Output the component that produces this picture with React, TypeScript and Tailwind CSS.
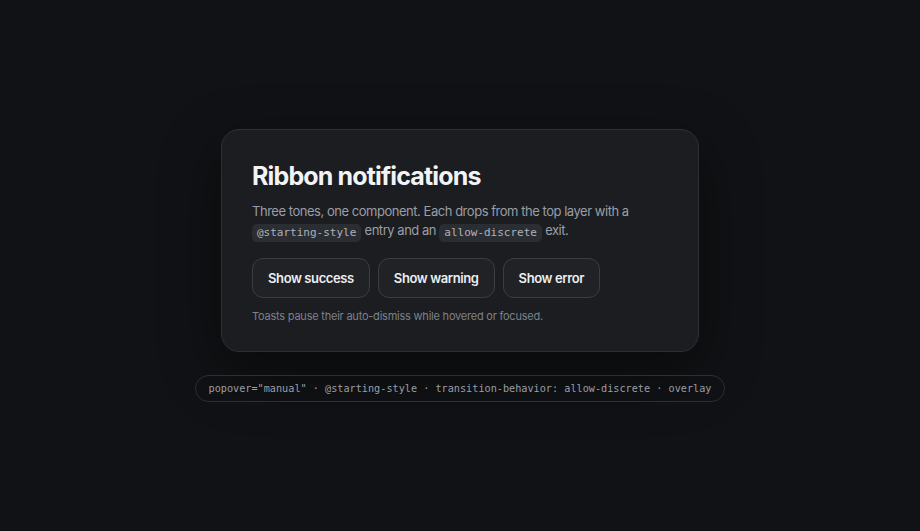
const buttons = ["Show success", "Show warning", "Show error"];

function Code({ children }: { children: React.ReactNode }) {
  return (
    <code className="inline-block rounded-[5px] bg-[#2a2d32] px-[5px] py-[2px] align-[-1px] font-['DejaVu_Sans_Mono',monospace] text-[11px] leading-[14px] tracking-normal text-[#aeb2b9]">
      {children}
    </code>
  );
}

export default function App() {
  return (
    <div className="flex min-h-screen flex-col items-center justify-center gap-[23px] bg-[#111215] font-['Inter',sans-serif]">
      <section className="w-[478px] rounded-[18px] border border-[#2c2f35] bg-[#1b1d21] px-[30px] pb-[27px] pt-[30px] shadow-[0_20px_60px_rgba(0,0,0,0.45)]">
        <h1 className="text-[25px] font-bold leading-[32px] tracking-[-0.034em] text-[#f2f3f5]">
          Ribbon notifications
        </h1>
        <p className="mt-[10px] text-[13px] leading-[19.5px] tracking-[-0.036em] text-[#9a9ea6]">
          Three tones, one component. Each drops from the top layer with a{" "}
          <Code>@starting-style</Code> entry and an <Code>allow-discrete</Code> exit.
        </p>
        <div className="mt-4 flex gap-2">
          {buttons.map((label) => (
            <button
              key={label}
              className="h-10 rounded-[11px] border border-[#3a3d43] bg-[#202226] px-[15px] text-[13px] font-semibold tracking-[-0.03em] text-[#eceef1]"
            >
              {label}
            </button>
          ))}
        </div>
        <p className="mt-[10px] text-[11px] leading-4 tracking-[-0.02em] text-[#7d8189]">
          Toasts pause their auto-dismiss while hovered or focused.
        </p>
      </section>
      <div className="rounded-full border border-[#2c2f35] px-[13px] py-[5px] font-['DejaVu_Sans_Mono',monospace] text-[10.2px] leading-[15px] text-[#9a9ea6]">
        popover="manual" · @starting-style · transition-behavior: allow-discrete · overlay
      </div>
    </div>
  );
}
